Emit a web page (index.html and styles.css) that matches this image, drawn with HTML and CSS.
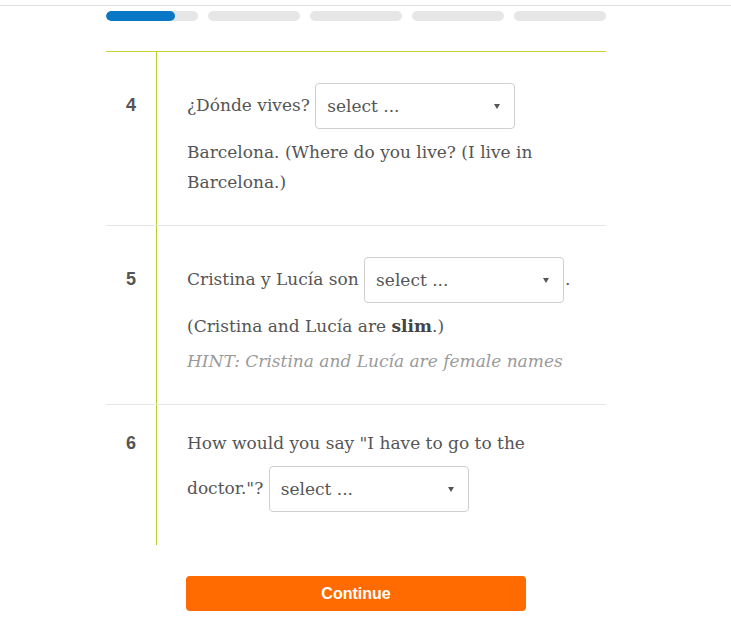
FILE: index.html
```html
<!DOCTYPE html>
<html lang="en">
<head>
<meta charset="utf-8">
<title>Quiz</title>
<link rel="stylesheet" href="styles.css">
</head>
<body>
<div class="topbar"></div>
<main class="quiz">
  <div class="progress">
    <div class="seg"><div class="fill" style="width:75%"></div></div>
    <div class="seg"></div>
    <div class="seg"></div>
    <div class="seg"></div>
    <div class="seg"></div>
  </div>
  <ol class="questions">
    <li class="question">
      <span class="num">4</span>
      <div class="body">
        <p class="text">¿Dónde vives? <span class="select">select ...</span> Barcelona. (Where do you live? (I live in Barcelona.)</p>
      </div>
    </li>
    <li class="question">
      <span class="num">5</span>
      <div class="body">
        <p class="text">Cristina y Lucía son <span class="select tight">select ...</span>. (Cristina and Lucía are <b>slim</b>.)</p>
        <p class="hint">HINT: Cristina and Lucía are female names</p>
      </div>
    </li>
    <li class="question">
      <span class="num">6</span>
      <div class="body">
        <p class="text">How would you say "I have to go to the doctor."? <span class="select">select ...</span></p>
      </div>
    </li>
  </ol>
  <div class="actions">
    <button class="continue">Continue</button>
  </div>
</main>
</body>
</html>
```
FILE: styles.css
```css
html, body {
  margin: 0;
  padding: 0;
  background: #fff;
}
body {
  font-family: "DejaVu Serif", "Liberation Serif", serif;
  color: #555;
}
.topbar {
  height: 5px;
  border-bottom: 1px solid #dedede;
}
.quiz {
  width: 500px;
  margin: 0 0 0 106px;
}
.progress {
  display: flex;
  gap: 10px;
  margin-top: 5px;
}
.seg {
  flex: 1;
  height: 10px;
  border-radius: 5px;
  background: #e6e6e6;
  overflow: hidden;
}
.fill {
  height: 100%;
  background: #0a77c6;
  border-radius: 5px;
}
.questions {
  list-style: none;
  margin: 30px 0 0;
  padding: 0;
  border-top: 1px solid #c3d22c;
  background: linear-gradient(#b5cf2e, #b5cf2e) 50px 0 / 1px 100% no-repeat;
}
.question {
  display: flex;
  align-items: baseline;
  padding: 23px 0 28px;
  border-bottom: 1px solid #e6e6e6;
}
.question:last-child {
  border-bottom: none;
  padding-bottom: 25px;
}
.num {
  flex: 0 0 50px;
  text-align: center;
  font-family: "Liberation Sans", Arial, sans-serif;
  font-weight: bold;
  font-size: 18px;
  color: #555;
}
.body {
  flex: 1;
  padding: 0 20px 0 31px;
}
.text, .hint {
  margin: 0;
  font-size: 17px;
  line-height: 30px;
}
.text b {
  font-weight: bold;
  color: #444;
}
.hint {
  margin-top: 5px;
  font-style: italic;
  color: #9a9a9a;
}
.select {
  display: inline-flex;
  align-items: center;
  box-sizing: border-box;
  width: 200px;
  height: 46px;
  margin: 8px 0;
  padding: 0 11px;
  vertical-align: middle;
  border: 1px solid #cfcfcf;
  border-radius: 4px;
  background: #fff;
  color: #555;
  font-size: 17px;
  position: relative;
}
.select.tight {
  margin-right: 1px;
}
.select::after {
  content: "";
  position: absolute;
  right: 14px;
  top: 50%;
  margin-top: -2px;
  border-left: 3.5px solid transparent;
  border-right: 3.5px solid transparent;
  border-top: 5px solid #555;
}
.actions {
  display: flex;
  justify-content: center;
  margin-top: 31px;
}
.continue {
  width: 340px;
  height: 35px;
  border: none;
  border-radius: 4px;
  background: #ff6b00;
  color: #fff;
  font-family: "Liberation Sans", Arial, sans-serif;
  font-weight: bold;
  font-size: 16px;
  cursor: pointer;
}
```
